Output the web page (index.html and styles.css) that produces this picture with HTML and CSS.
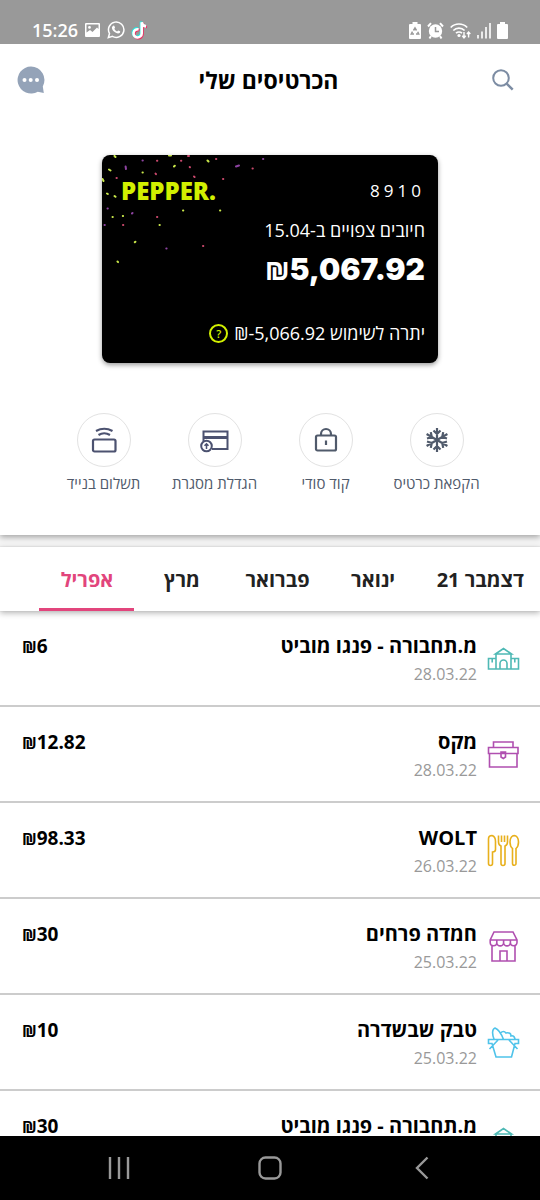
FILE: index.html
```html
<!DOCTYPE html>
<html lang="he" dir="rtl">
<head>
<meta charset="utf-8">
<meta name="viewport" content="width=device-width, initial-scale=1">
<title>הכרטיסים שלי</title>
<link rel="stylesheet" href="styles.css">
</head>
<body>
<svg class="sprite" aria-hidden="true">
  <symbol id="building" viewBox="0 0 34 34">
    <path d="M10 28V13h15v15M9.500 13l8-5.500 8 5.500zM10 17.500H2.500V28h30V17.500H25M14 28v-5.500a3.500 3.500 0 0 1 7 0V28M6.200 17.500v4M28.800 17.500v4"/>
  </symbol>
</svg>
<div class="app">
  <div class="status" dir="ltr">
    <div class="status-group">
      <span class="clock">15:26</span>
      <svg width="17" height="17" viewBox="0 0 17 17"><path fill="#fff" fill-rule="evenodd" d="M2 1h13q1 0 1 1v12q0 1-1 1H2q-1 0-1-1V2q0-1 1-1zM2.500 2.500v8l3.500-2.500 2.500 2 4.500-4.500 1.500 1.500V2.500zM5.500 4a1.400 1.400 0 1 1 0 2.800 1.400 1.400 0 0 1 0-2.800z"/></svg>
      <svg width="18" height="18" viewBox="0 0 18 18"><path fill="none" stroke="#fff" stroke-width="1.500" d="M1.300 16.700l1.200-4.200a7.700 7.700 0 1 1 2.900 2.900z"/><path fill="#fff" d="M6.300 4.700c.6-.3 1 0 1.200.6l.5 1.200c.1.500-.8 1.200-.6 1.500.6 1.100 1.500 1.900 2.600 2.400.4.100 1-1 1.400-.9l1.600.8c.5.300 0 1.400-.5 1.800-1.300.9-3.200.2-4.800-1-1.500-1.200-2.700-2.800-2.800-4.200-.1-.9.500-1.800 1.400-2.200z"/></svg>
      <svg width="17" height="20" viewBox="0 0 17 20"><g fill="none" stroke-width="2.600"><path stroke="#25e5df" d="M6.700 8.500a4.100 4.100 0 1 0 3.300 4V1.500c.3 2.700 2.200 4 4.300 4.200"/><path stroke="#ef2d62" d="M8.500 10.200a4.100 4.100 0 1 0 3 4V3c.5 2.500 2.200 3.700 4.500 4"/><path stroke="#fff" d="M7.600 9.400a4.100 4.100 0 1 0 3.100 4V2.200c.4 2.600 2.200 3.900 4.400 4.200"/></g></svg>
    </div>
    <div class="status-group status-end">
      <svg width="12" height="17" viewBox="0 0 12 17"><path fill="#fff" d="M1 2h2.500V0h5v2H11q1 0 1 1v13q0 1-1 1H1q-1 0-1-1V3q0-1 1-1z"/><path fill="none" stroke="#999" stroke-width="1.500" d="M4.500 8.500L6 6l1.500 2.500M8.700 9.800l1 2.200H7M5 12H2.300l1.200-2.300"/></svg>
      <svg width="17" height="17" viewBox="0 0 17 17"><circle cx="8.500" cy="9" r="6.700" fill="#fff"/><path stroke="#fff" stroke-width="2" fill="none" d="M1 4.500L4 1.200M16 4.500l-3-3.300M4 14l-1.500 2.500M13 14l1.500 2.500"/><path fill="none" stroke="#999" stroke-width="1.500" d="M8.500 5v4.500H12"/></svg>
      <svg width="21" height="17" viewBox="0 0 21 17"><g fill="none" stroke="#fff" stroke-width="1.700"><path d="M.7 5.500a11.500 11.500 0 0 1 16.500 0M3.300 8.500a8 8 0 0 1 11.300 0M6 11.200a4.300 4.300 0 0 1 6 0"/></g><circle cx="9" cy="13.500" r="1.600" fill="#fff"/><path fill="none" stroke="#fff" stroke-width="1.400" d="M14 10v5.500M12.300 13.800l1.700 2 1.700-2M18.600 15.500V10M16.900 12l1.700-2 1.700 2"/></svg>
      <svg width="14" height="17" viewBox="0 0 14 17"><path stroke="#fff" stroke-width="1.600" d="M1 13v3.500M5 9.500v7M9 5v11.500M13 1v15.500"/></svg>
      <svg width="11" height="17" viewBox="0 0 11 17"><path fill="#fff" d="M1 2h2V0h5v2h2q1 0 1 1v13q0 1-1 1H1q-1 0-1-1V3q0-1 1-1z"/></svg>
    </div>
  </div>

  <header class="header">
    <button class="icon-button" aria-label="חיפוש">
      <svg width="22" height="22" viewBox="0 0 22 22" fill="none" stroke="#7c8ca3" stroke-width="2"><circle cx="9" cy="9" r="7.800"/><path d="M14.700 14.700l6 6" stroke-width="2.400"/></svg>
    </button>
    <h1 class="title">הכרטיסים שלי</h1>
    <button class="icon-button" aria-label="צ'אט">
      <svg width="28" height="28" viewBox="0 0 28 28"><path fill="#94a3b8" d="M14 .5a13.500 13.500 0 0 1 11.800 20l1 6.500-6-1.300A13.500 13.500 0 1 1 14 .5z"/><g fill="#fff"><circle cx="7.500" cy="14" r="2"/><circle cx="13.700" cy="14" r="2"/><circle cx="20" cy="14" r="2"/></g></svg>
    </button>
  </header>

  <main class="main">
    <section class="overview">
      <div class="card">
        <svg class="confetti" width="170" height="112" viewBox="0 0 170 112" fill="none" stroke-width="2" stroke-linecap="round" aria-hidden="true">
          <path stroke="#c8e64a" d="M12.500 1l1 1M7 14.500l1.500 1M.5 24l1 2M5 38.500l.8.500M12.500 41l1 .8M40.500 17.500h.3M72 11.500l.8-.8M105.500 5.500l1 1M81 55.500h.3M118 55.500h.3M10.500 62h.3M20.800 61h.3M57.500 70h.3M32.800 87.300l.6-.6M15.500 106.500l.6.600M67 .5h2"/>
          <path stroke="#c9486c" d="M55 5.800h.3M79 5.800h.3M87.700 12l.3.300M53.500 18.500l.5.700M92 21.500l.6.500M114 4h.3M150.500 13.500h.3M14.500 23h.3M121 24h.3M55 62h.3M21 70h.3M101 91h.3M86 1h1"/>
          <path stroke="#8d43a0" d="M40.500 5.500h.3M23.600 11.500l.4 2.500M134 11.500l3-1M161 4h.3M5.500 53.500h.3M30 58.500l.5-.5M2.500 70h.3M64.300 93.500h.3"/>
        </svg>
        <div class="card-top">
          <span class="card-number">8910</span>
          <span class="brand" dir="ltr">PEPPER.</span>
        </div>
        <p class="card-label">חיובים צפויים ב-15.04</p>
        <p class="card-sum"><bdi dir="ltr"><span class="sum-sign">₪</span>5,067.92</bdi></p>
        <div class="card-balance">
          <span>יתרה לשימוש <bdi dir="ltr">₪-5,066.92</bdi></span>
          <button class="help" aria-label="מידע">?</button>
        </div>
      </div>

      <div class="actions">
        <button class="action">
          <span class="action-circle"><svg width="24" height="26" viewBox="0 0 24 26" fill="none" stroke="#505a6b" stroke-width="2.200"><path d="M12 13V1M8.500 3.500L12 7l3.500-3.500M12 13v12M8.500 22.500L12 19l3.500 3.500M12 13L1.600 7M12 13l10.400 6M12 13l10.400-6M12 13L1.600 19M2 11.500l4.800-1.500-1-4.900M22 14.500l-4.800 1.500 1 4.900M22 11.500l-4.800-1.500 1-4.900M2 14.500l4.800 1.500-1 4.900"/></svg></span>
          <span>הקפאת כרטיס</span>
        </button>
        <button class="action">
          <span class="action-circle"><svg width="24" height="26" viewBox="0 0 24 26" fill="none" stroke="#505a6b" stroke-width="2.200"><rect x="2" y="8.500" width="20" height="15" rx="1.500"/><path d="M7 8V7a5 5 0 0 1 10 0v1M12 13.500v4.500"/></svg></span>
          <span>קוד סודי</span>
        </button>
        <button class="action">
          <span class="action-circle"><svg width="30" height="26" viewBox="0 0 30 26" fill="none" stroke="#4c5270" stroke-width="2"><path d="M3.500 14V4.500h24v17.500H12"/><path d="M3.500 10.500h24" stroke-width="3"/><circle cx="6.500" cy="19" r="5.300" fill="#fff"/><path d="M6.500 22v-5M4.500 18.700l2-2 2 2" stroke-width="1.500"/></svg></span>
          <span>הגדלת מסגרת</span>
        </button>
        <button class="action">
          <span class="action-circle"><svg width="26" height="26" viewBox="0 0 26 26" fill="none" stroke="#4c5270" stroke-width="2.200"><rect x="2" y="12.500" width="22.500" height="12" rx="1.500"/><path d="M7.500 8q5.700-3.500 11.500 0M5 4q8.200-4.500 16.500 0"/></svg></span>
          <span>תשלום בנייד</span>
        </button>
      </div>
    </section>

    <nav class="tabs">
      <button class="tab">דצמבר 21</button>
      <button class="tab">ינואר</button>
      <button class="tab">פברואר</button>
      <button class="tab">מרץ</button>
      <button class="tab tab-active" aria-current="true">אפריל</button>
    </nav>

    <ul class="list">
      <li class="row">
        <svg class="row-icon teal" viewBox="0 0 34 34"><use href="#building"/></svg>
        <div class="row-text"><span class="row-name">מ.תחבורה - פנגו מוביט</span><span class="row-date">28.03.22</span></div>
        <bdi class="row-amount" dir="ltr"><span class="row-sign">₪</span>6</bdi>
      </li>
      <li class="row">
        <svg class="row-icon purple" viewBox="0 0 34 34"><path d="M7.500 10.500V5h19.500v5.500M2.500 10.500h29.500v6H2.500zM3.500 16.500V30h27.500V16.500M15 15h4.500v5l-2.200 1.500L15 20z"/></svg>
        <div class="row-text"><span class="row-name">מקס</span><span class="row-date">28.03.22</span></div>
        <bdi class="row-amount" dir="ltr"><span class="row-sign">₪</span>12.82</bdi>
      </li>
      <li class="row">
        <svg class="row-icon gold" viewBox="0 0 34 34"><path d="M2.500 30.500V6q0-3.500 3.500-3.500 3.500 1 3.500 6v8q0 2.500-3 2.500v11.500a2 2 0 0 1-4 0zM12.500 2.500v6.500q0 3 2.500 4v17.500a2 2 0 0 0 4 0V13q2.500-1 2.500-4V2.500M15.500 2.500V9M18.500 2.500V9M26.500 15.500q-2.500-2-2.500-6.500c0-8.500 8.500-8.500 8.500 0q0 4.500-2.500 6.500v15a1.750 1.750 0 0 1-3.500 0z"/></svg>
        <div class="row-text"><span class="row-name">WOLT</span><span class="row-date">26.03.22</span></div>
        <bdi class="row-amount" dir="ltr"><span class="row-sign">₪</span>98.33</bdi>
      </li>
      <li class="row">
        <svg class="row-icon purple" viewBox="0 0 34 34"><path d="M8 3h19l4 8v2.500a3.300 3.300 0 0 1-6.600 0 3.300 3.300 0 0 1-6.800 0 3.300 3.300 0 0 1-6.800 0 3.300 3.300 0 0 1-6.600 0V11zM4.500 11h26M10.800 11v3M17.600 11v3M24.400 11v3M6 17v15h23V17M14 32V22h7v10"/></svg>
        <div class="row-text"><span class="row-name">חמדה פרחים</span><span class="row-date">25.03.22</span></div>
        <bdi class="row-amount" dir="ltr"><span class="row-sign">₪</span>30</bdi>
      </li>
      <li class="row">
        <svg class="row-icon sky" viewBox="0 0 34 34"><path d="M2.500 14.500h30v4h-3.500L25.500 32H10L6 18.500H2.500zM8 14C6 9 6 4 9 3q5 2 8.500 11.500M14.500 8q3-3 5.500 0 5-1 5 3 3-1 4 3M12 15L3.500 24M23 15l8.500 9"/></svg>
        <div class="row-text"><span class="row-name">טבק שבשדרה</span><span class="row-date">25.03.22</span></div>
        <bdi class="row-amount" dir="ltr"><span class="row-sign">₪</span>10</bdi>
      </li>
      <li class="row">
        <svg class="row-icon teal" viewBox="0 0 34 34"><use href="#building"/></svg>
        <div class="row-text"><span class="row-name">מ.תחבורה - פנגו מוביט</span></div>
        <bdi class="row-amount" dir="ltr"><span class="row-sign">₪</span>30</bdi>
      </li>
    </ul>
  </main>

  <div class="system-nav" dir="ltr">
    <button class="system-button" aria-label="יישומים אחרונים"><svg width="24" height="24" viewBox="0 0 24 24" fill="none" stroke="#999" stroke-width="2.400"><path d="M3 1v22M12 1v22M21 1v22"/></svg></button>
    <button class="system-button" aria-label="בית"><svg width="24" height="24" viewBox="0 0 24 24" fill="none" stroke="#999" stroke-width="2.400"><rect x="1.500" y="1.500" width="21" height="21" rx="6"/></svg></button>
    <button class="system-button" aria-label="חזרה"><svg width="24" height="24" viewBox="0 0 24 24" fill="none" stroke="#999" stroke-width="2.400"><path d="M18.500 1.500L8 12l10.500 10.500"/></svg></button>
  </div>
</div>
</body>
</html>
```
FILE: styles.css
```css
* { box-sizing: border-box; }
body {
  margin: 0;
  background: #fff;
  color: #000;
  font-family: "Open Sans", "Noto Sans", sans-serif;
}
button {
  margin: 0;
  padding: 0;
  border: 0;
  background: none;
  color: inherit;
  font: inherit;
  cursor: pointer;
}
p, h1, ul { margin: 0; padding: 0; }
svg { display: block; flex: none; }
.sprite { display: none; }

.app {
  display: flex;
  flex-direction: column;
  height: 100vh;
}

.status {
  display: flex;
  justify-content: space-between;
  align-items: flex-end;
  height: 44px;
  padding: 0 32px 4px;
  background: #999;
  color: #fff;
  flex: none;
}
.status-group { display: flex; align-items: center; gap: 6px; }
.status-end { padding-bottom: 1px; }
.clock { font-size: 18px; line-height: 20px; font-weight: 600; }

.header {
  display: flex;
  justify-content: space-between;
  align-items: center;
  height: 72px;
  padding: 0 26px 0 17px;
  flex: none;
}
.title { font-size: 23px; line-height: 32px; font-weight: 700; }

.main {
  display: flex;
  flex-direction: column;
  flex: 1;
  min-height: 0;
  overflow: hidden;
  background: #f5f5f5;
}
.overview {
  padding: 39px 48px 42px;
  background: #fff;
  box-shadow: 0 2px 6px rgba(0, 0, 0, 0.35);
  flex: none;
}

.card {
  position: relative;
  max-width: 336px;
  margin: 0 auto;
  padding: 22px 13px 16px;
  border-radius: 8px;
  background: #000;
  color: #fff;
  box-shadow: 0 2px 5px rgba(0, 0, 0, 0.4);
  overflow: hidden;
}
.confetti { position: absolute; top: 0; left: 0; }
.card-top {
  display: flex;
  justify-content: space-between;
  align-items: center;
  height: 26px;
  padding-left: 6px;
}
.card-number { font-size: 17px; font-weight: 500; letter-spacing: 4px; }
.brand { color: #d2f000; font-size: 24px; font-weight: 800; }
.card-label { margin-top: 14px; font-size: 18px; line-height: 26px; font-weight: 500; }
.card-sum {
  margin-top: 4px;
  font-family: "Inter", "Open Sans", sans-serif;
  font-size: 30px;
  line-height: 44px;
  font-weight: 900;
}
.sum-sign {
  font-family: "Open Sans", sans-serif;
  font-size: 24px;
  line-height: 24px;
  font-weight: 800;
}
.card-balance {
  display: flex;
  align-items: center;
  gap: 6px;
  margin-top: 28px;
  font-size: 18px;
  line-height: 28px;
  font-weight: 500;
}
.help {
  width: 19px;
  height: 19px;
  border: 2px solid #d2f000;
  border-radius: 50%;
  color: #d2f000;
  font-size: 11px;
  line-height: 15px;
  font-weight: 600;
}

.actions {
  display: grid;
  grid-template-columns: repeat(4, 1fr);
  margin-top: 50px;
}
.action {
  display: flex;
  flex-direction: column;
  align-items: center;
  gap: 6px;
  color: #505a6b;
  font-size: 15px;
  line-height: 20px;
  white-space: nowrap;
}
.action-circle {
  display: grid;
  place-items: center;
  width: 54px;
  height: 54px;
  border: 1px solid #e2e2e2;
  border-radius: 50%;
}

.tabs {
  display: flex;
  height: 64px;
  margin-top: 12px;
  background: #fff;
  box-shadow: 0 0 1px #bbb, 0 2px 6px rgba(0, 0, 0, 0.3);
  flex: none;
  z-index: 1;
}
.tab {
  min-width: 95px;
  padding: 4px 16px 0;
  border-bottom: 3px solid transparent;
  color: #222;
  font-size: 20px;
  font-weight: 700;
  white-space: nowrap;
}
.tab-active { border-color: #e2457c; color: #e2457c; }

.list { list-style: none; background: #fff; }
.row {
  display: flex;
  height: 96px;
  padding: 21px 20px 0 22px;
  border-bottom: 2px solid #ccc;
}
.row-icon {
  width: 34px;
  height: 34px;
  margin-top: 9px;
  fill: none;
  stroke: currentColor;
  stroke-width: 1.6;
}
.teal { color: #4fb9b5; }
.purple { color: #b04fb0; }
.gold { color: #e8b01c; }
.sky { color: #4fc3ea; }
.row-text {
  display: flex;
  flex-direction: column;
  flex: 1;
  gap: 2px;
  padding-right: 9px;
}
.row-name { font-size: 20px; line-height: 28px; font-weight: 700; }
.row-date { color: #999; font-size: 16px; line-height: 24px; font-weight: 500; }
.row-amount { font-size: 19px; line-height: 28px; font-weight: 700; }
.row-sign { font-size: 16px; }

.system-nav {
  display: flex;
  justify-content: space-around;
  align-items: center;
  height: 64px;
  padding: 0 44px;
  background: #000;
  flex: none;
}
```
